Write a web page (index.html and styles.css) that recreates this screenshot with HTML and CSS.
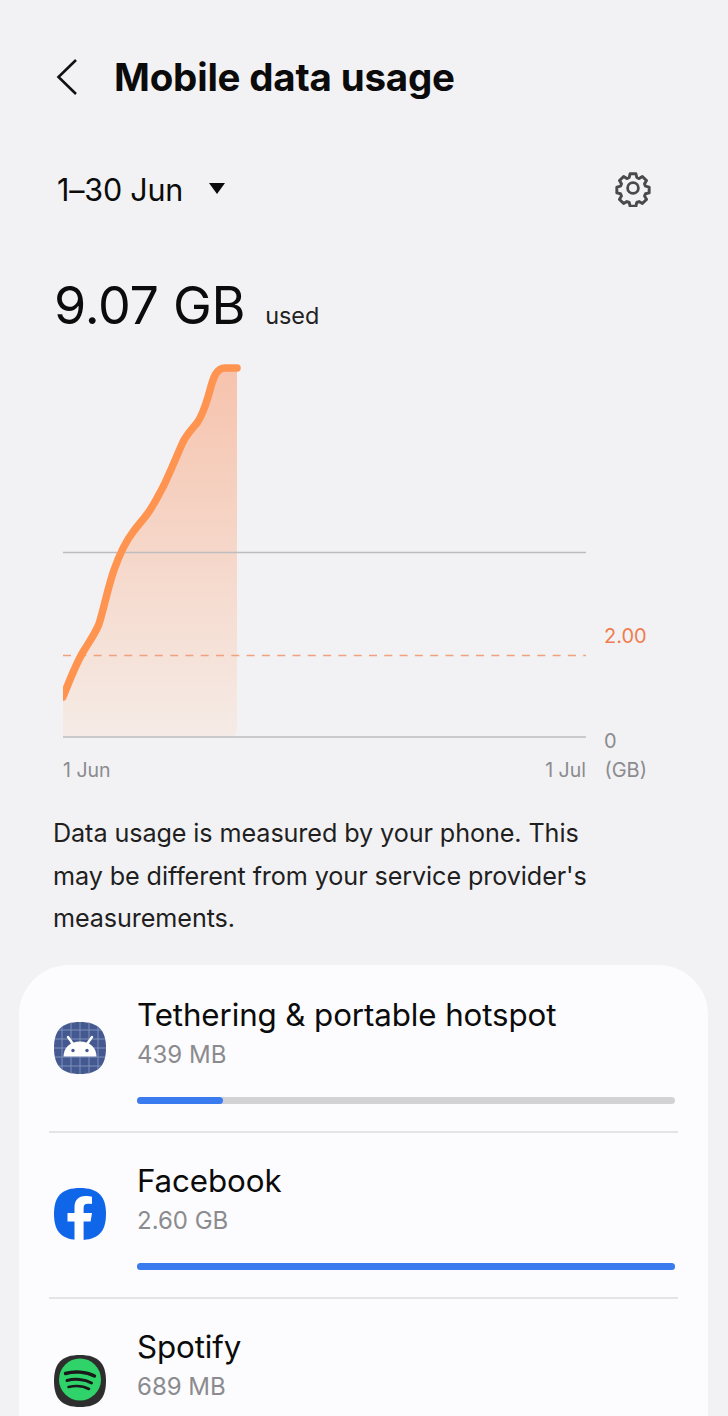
FILE: index.html
```html
<!DOCTYPE html>
<html lang="en">
<head>
<meta charset="utf-8">
<title>Mobile data usage</title>
<link rel="stylesheet" href="styles.css">
</head>
<body>
<div class="screen">
  <header class="topbar">
    <svg class="back" width="24" height="38" viewBox="0 0 24 38"><path d="M21 2 3.500 19 21 36" fill="none" stroke="#111" stroke-width="2.600"/></svg>
    <h1 class="title">Mobile data usage</h1>
  </header>
  <div class="period">
    <span class="period-label">1–30 Jun</span>
    <svg class="caret" width="18" height="12" viewBox="0 0 18 12"><path d="M1 1h16l-8 11z" fill="#0b0b0b"/></svg>
    <svg class="gear" width="38" height="38" viewBox="0 0 38 38"><path d="M15.600 2.500h6.800l1 4.300 2.700 1.200 3.800-2.400 4.800 4.800-2.300 3.800 1.100 2.700 4.300 1v6.800l-4.300 1-1.100 2.700 2.300 3.800-4.800 4.800-3.800-2.300-2.700 1.100-1 4.300h-6.800l-1-4.300-2.700-1.100-3.800 2.300-4.800-4.800 2.300-3.800-1.100-2.700-4.300-1v-6.800l4.300-1 1.100-2.700-2.300-3.800 4.800-4.800 3.800 2.400 2.700-1.200z" transform="translate(2.660 2.660) scale(.86)" fill="none" stroke="#4a4a4e" stroke-width="3.400" stroke-linejoin="round"/><circle cx="19" cy="19" r="5.400" fill="none" stroke="#4a4a4e" stroke-width="2.800"/></svg>
  </div>
  <div class="total"><span class="amount">9.07 GB</span><span class="used">used</span></div>
  <div class="chart">
    <svg class="plot" width="530" height="385" viewBox="0 0 530 385">
      <defs>
        <linearGradient id="area" x1="0" y1="0" x2="0" y2="1">
          <stop offset="0" stop-color="#f6c3ad"/>
          <stop offset="1" stop-color="#f5ebe6"/>
        </linearGradient>
      </defs>
      <path d="M0 339C7 321 13 306 20 294C26 284 32 276 36 266C41 250 45 229 51 212C57 195 63 183 70 174C75 167 80 162 85 155C92 145 95 138 100 129C107 115 114 97 120 84C124 76 129 71 134 65C139 58 142 49 145 39C149 26 151 10 162 10L174 10V370Q174 379 165 379H0Z" fill="url(#area)"/>
      <path class="rule" d="M0 194.500H523M0 379H523"/>
      <path class="limit" d="M0 297.500H523"/>
      <path class="curve" d="M0 339C7 321 13 306 20 294C26 284 32 276 36 266C41 250 45 229 51 212C57 195 63 183 70 174C75 167 80 162 85 155C92 145 95 138 100 129C107 115 114 97 120 84C124 76 129 71 134 65C139 58 142 49 145 39C149 26 151 10 162 10L174 10"/>
    </svg>
    <span class="tick limit-tick">2.00</span>
    <span class="tick zero-tick">0</span>
    <div class="axis">
      <span>1 Jun</span><span class="axis-end">1 Jul</span><span class="axis-unit">(GB)</span>
    </div>
  </div>
  <p class="note">Data usage is measured by your phone. This may be different from your service provider's measurements.</p>
  <section class="card">
    <div class="row">
      <svg class="app-icon" width="52" height="52" viewBox="0 0 52 52">
        <path class="squircle" fill="#43598f" d="M26 0C44 0 52 8 52 26S44 52 26 52 0 44 0 26 8 0 26 0Z"/>
        <path d="M8 0V52M17 0V52M26 0V52M35 0V52M44 0V52M0 8H52M0 17H52M0 26H52M0 35H52M0 44H52" stroke="#7f90bb" stroke-width="1" clip-path="url(#sq)"/>
        <clipPath id="sq"><path d="M26 0C44 0 52 8 52 26S44 52 26 52 0 44 0 26 8 0 26 0Z"/></clipPath>
        <path d="M9.500 34.500C9.500 26 16 19.500 26 19.500S42.500 26 42.500 34.500Z" fill="#fff"/>
        <path d="M14 15l5 7M38 15l-5 7" stroke="#fff" stroke-width="2.400" stroke-linecap="round"/>
        <circle cx="19" cy="28.500" r="1.700" fill="#43598f"/><circle cx="33" cy="28.500" r="1.700" fill="#43598f"/>
      </svg>
      <div class="row-body">
        <div class="app-name">Tethering &amp; portable hotspot</div>
        <div class="app-size">439 MB</div>
        <div class="bar"><div class="bar-fill" style="width:16%"></div></div>
      </div>
    </div>
    <div class="row">
      <svg class="app-icon" width="52" height="52" viewBox="0 0 52 52">
        <path fill="#0f66e8" d="M26 0C44 0 52 8 52 26S44 52 26 52 0 44 0 26 8 0 26 0Z"/>
        <path fill="#fff" d="M20.500 52V33.500H13.500V25H20.500V19.500C20.500 12 24.500 8 31.500 8C34 8 36.500 8.300 38 8.700V16C37 15.800 35.500 15.700 33.800 15.700C30.800 15.700 29.600 17 29.600 20V25H38L36.600 33.500H29.600V52Z"/>
      </svg>
      <div class="row-body">
        <div class="app-name">Facebook</div>
        <div class="app-size">2.60 GB</div>
        <div class="bar"><div class="bar-fill" style="width:100%"></div></div>
      </div>
    </div>
    <div class="row">
      <svg class="app-icon" width="52" height="52" viewBox="0 0 52 52">
        <path fill="#2e2e2e" d="M26 0C44 0 52 8 52 26S44 52 26 52 0 44 0 26 8 0 26 0Z"/>
        <circle cx="26" cy="24.500" r="21" fill="#2fd36a"/>
        <path d="M11.500 18.500C20 16 32 16.500 40.500 21" fill="none" stroke="#1a1a1a" stroke-width="3.400" stroke-linecap="round"/>
        <path d="M13 25.500C20.500 23.500 30.500 24 37.500 28" fill="none" stroke="#1a1a1a" stroke-width="3" stroke-linecap="round"/>
        <path d="M14.500 32C21 30.500 29.500 31 35 34" fill="none" stroke="#1a1a1a" stroke-width="2.600" stroke-linecap="round"/>
      </svg>
      <div class="row-body">
        <div class="app-name">Spotify</div>
        <div class="app-size">689 MB</div>
      </div>
    </div>
  </section>
</div>
</body>
</html>
```
FILE: styles.css
```css
* { box-sizing: border-box; }
html, body { margin: 0; padding: 0; }
body {
  width: 728px;
  height: 1416px;
  overflow: hidden;
  background: #f2f2f4;
  font-family: Inter, "Liberation Sans", sans-serif;
  color: #0b0b0b;
}
.screen { display: flex; flex-direction: column; height: 1416px; overflow: hidden; }
.screen > * { flex: none; }

.topbar { display: flex; align-items: center; gap: 35px; padding: 38px 0 0 55px; height: 116px; }
.back { flex: none; }
.title { margin: 0; font-size: 38.500px; line-height: 40px; font-weight: 700; letter-spacing: -.2px; }

.period { display: flex; align-items: center; height: 44px; margin-top: 52px; padding: 0 76px 0 57px; }
.period-label { font-size: 30.500px; line-height: 44px; font-weight: 400; letter-spacing: -.2px; }
.caret { margin-left: 25px; margin-bottom: 5px; }
.gear { margin-left: auto; margin-bottom: 4px; }

.total { display: flex; align-items: baseline; height: 60px; margin-top: 64px; padding-left: 54px; }
.amount { font-size: 52px; line-height: 60px; letter-spacing: -.3px; }
.used { margin-left: 20px; font-size: 23.400px; color: #222; }

.chart { position: relative; height: 454px; margin-top: 22px; padding-left: 63px; }
.plot { display: block; }
.rule { stroke: #bdbdc0; stroke-width: 1.500; fill: none; }
.limit { stroke: #f0a17e; stroke-width: 1.500; stroke-dasharray: 8 7.300; fill: none; }
.curve { fill: none; stroke: #ff9451; stroke-width: 7.500; stroke-linecap: round; stroke-linejoin: round; }
.tick { position: absolute; left: 604px; font-size: 20px; line-height: 24px; color: #8b8b8f; }
.limit-tick { top: 266px; color: #ef7d4f; }
.zero-tick { top: 371px; }
.axis { display: flex; font-size: 19.500px; line-height: 24px; color: #8b8b8f; width: 584px; margin-top: 15px; position: relative; }
.axis-end { margin-left: auto; margin-right: 61px; }
.axis-unit { position: absolute; right: 0; font-size: 20px; }

.note { margin: 0; padding: 0 130px 0 53px; font-size: 25.200px; line-height: 42.500px; color: #1f1f1f; letter-spacing: -.1px; }

.card { margin: 25px 20px 0 19px; padding: 2px 30px 0; background: #fcfcfe; border-radius: 50px 50px 0 0; }
.row { display: flex; align-items: center; gap: 31px; height: 166px; border-bottom: 2px solid #e4e4e6; padding: 0 3px 0 5px; }
.row:last-child { border-bottom: 0; }
.row-body { flex: 1; min-width: 0; align-self: flex-start; padding-top: 26px; }
.app-icon { flex: none; margin-bottom: 2px; }
.app-name { font-size: 31.300px; line-height: 44px; letter-spacing: -.1px; }
.app-size { font-size: 24px; line-height: 34px; margin-top: 1px; color: #8b8b8f; }
.bar { height: 7px; border-radius: 4px; margin-top: 25px; background: #d2d2d4; }
.bar-fill { height: 7px; border-radius: 4px; background: #3b7bf0; }
```
